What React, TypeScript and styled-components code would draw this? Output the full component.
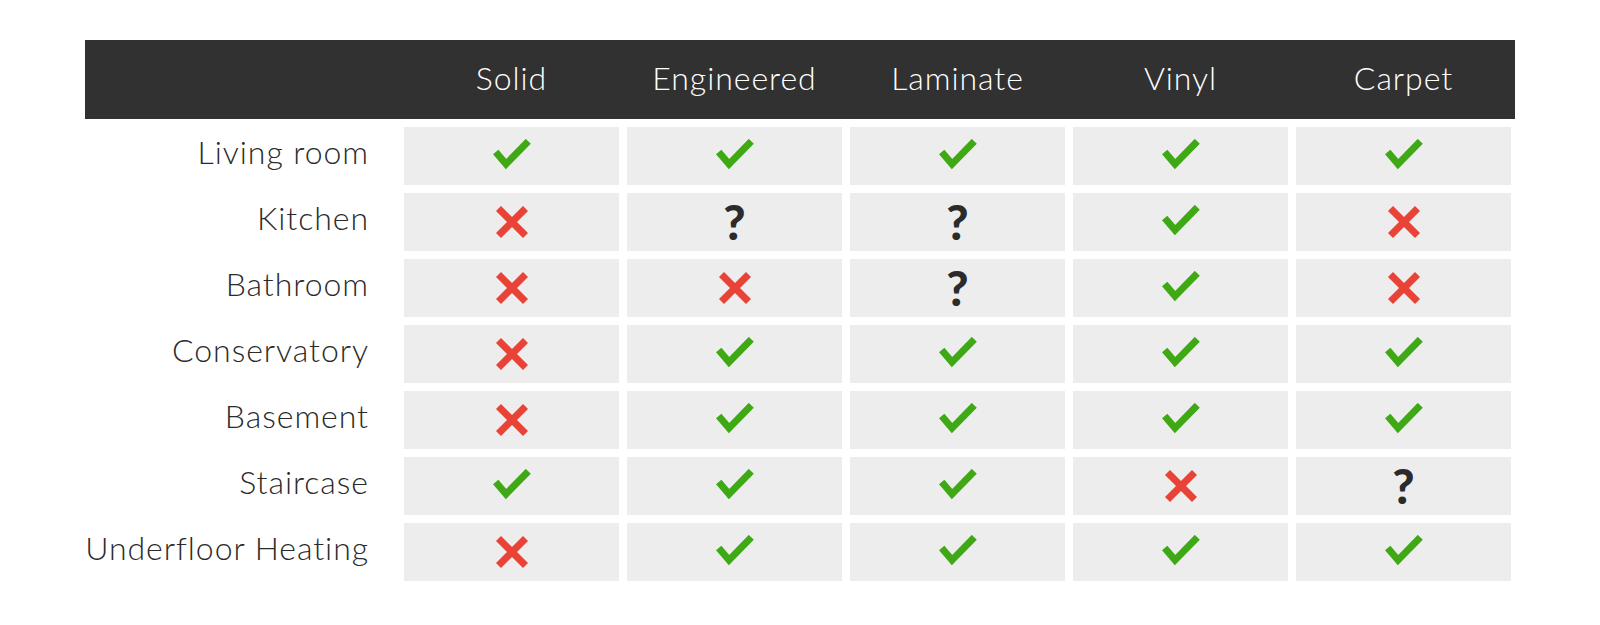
import React from "react";
import styled, { createGlobalStyle } from "styled-components";

const GlobalStyle = createGlobalStyle`
  html, body {
    margin: 0;
    padding: 0;
    background: #ffffff;
  }
  body {
    font-family: Lato, "Open Sans", sans-serif;
  }
`;

const Page = styled.div`
  padding: 40px 0 0 85px;
`;

const Header = styled.div`
  width: 1430px;
  height: 79px;
  background: #313131;
  display: grid;
  grid-template-columns: 311px repeat(5, 215px);
  column-gap: 8px;
  align-items: center;
  box-sizing: border-box;
  padding-bottom: 4px;
`;

const HeaderLabel = styled.div`
  color: #ffffff;
  font-size: 32px;
  font-weight: 300;
  letter-spacing: 0.95px;
  text-align: center;
`;

const Body = styled.div`
  margin-top: 8px;
  display: grid;
  grid-template-columns: 311px repeat(5, 215px);
  grid-auto-rows: 58px;
  gap: 8px;
`;

const RowLabel = styled.div`
  display: flex;
  align-items: center;
  justify-content: flex-end;
  padding: 0 27px 9px 0;
  color: #2a2a2a;
  font-size: 32px;
  font-weight: 300;
  letter-spacing: 0.95px;
`;

const Cell = styled.div`
  background: #ededed;
  display: flex;
  align-items: center;
  justify-content: center;
`;

const Question = styled.span`
  font-family: Lato, sans-serif;
  font-weight: 900;
  font-size: 48px;
  line-height: 1;
  color: #2b2b2b;
`;

type Mark = "y" | "n" | "q";

const Check = () => (
  <svg width="38" height="34" viewBox="0 0 38 34">
    <polyline
      points="2.7,13 13,25.1 35.3,2.3"
      fill="none"
      stroke="#3ea915"
      strokeWidth="7"
      strokeLinecap="butt"
      strokeLinejoin="miter"
    />
  </svg>
);

const Cross = () => (
  <svg width="32" height="32" viewBox="0 0 32 32">
    <g stroke="#e84336" strokeWidth="7" strokeLinecap="butt">
      <line x1="2.5" y1="2.5" x2="29.5" y2="29.5" />
      <line x1="29.5" y1="2.5" x2="2.5" y2="29.5" />
    </g>
  </svg>
);

const MarkIcon = ({ m }: { m: Mark }) => {
  if (m === "y") return <Check />;
  if (m === "n") return <Cross />;
  return <Question>?</Question>;
};

const columns = ["Solid", "Engineered", "Laminate", "Vinyl", "Carpet"];

const rows: { label: string; marks: Mark[] }[] = [
  { label: "Living room", marks: ["y", "y", "y", "y", "y"] },
  { label: "Kitchen", marks: ["n", "q", "q", "y", "n"] },
  { label: "Bathroom", marks: ["n", "n", "q", "y", "n"] },
  { label: "Conservatory", marks: ["n", "y", "y", "y", "y"] },
  { label: "Basement", marks: ["n", "y", "y", "y", "y"] },
  { label: "Staircase", marks: ["y", "y", "y", "n", "q"] },
  { label: "Underfloor Heating", marks: ["n", "y", "y", "y", "y"] },
];

export default function App() {
  return (
    <>
      <GlobalStyle />
      <Page>
        <Header>
          <div />
          {columns.map((c) => (
            <HeaderLabel key={c}>{c}</HeaderLabel>
          ))}
        </Header>
        <Body>
          {rows.map((r) => (
            <React.Fragment key={r.label}>
              <RowLabel>{r.label}</RowLabel>
              {r.marks.map((m, i) => (
                <Cell key={i}>
                  <MarkIcon m={m} />
                </Cell>
              ))}
            </React.Fragment>
          ))}
        </Body>
      </Page>
    </>
  );
}
